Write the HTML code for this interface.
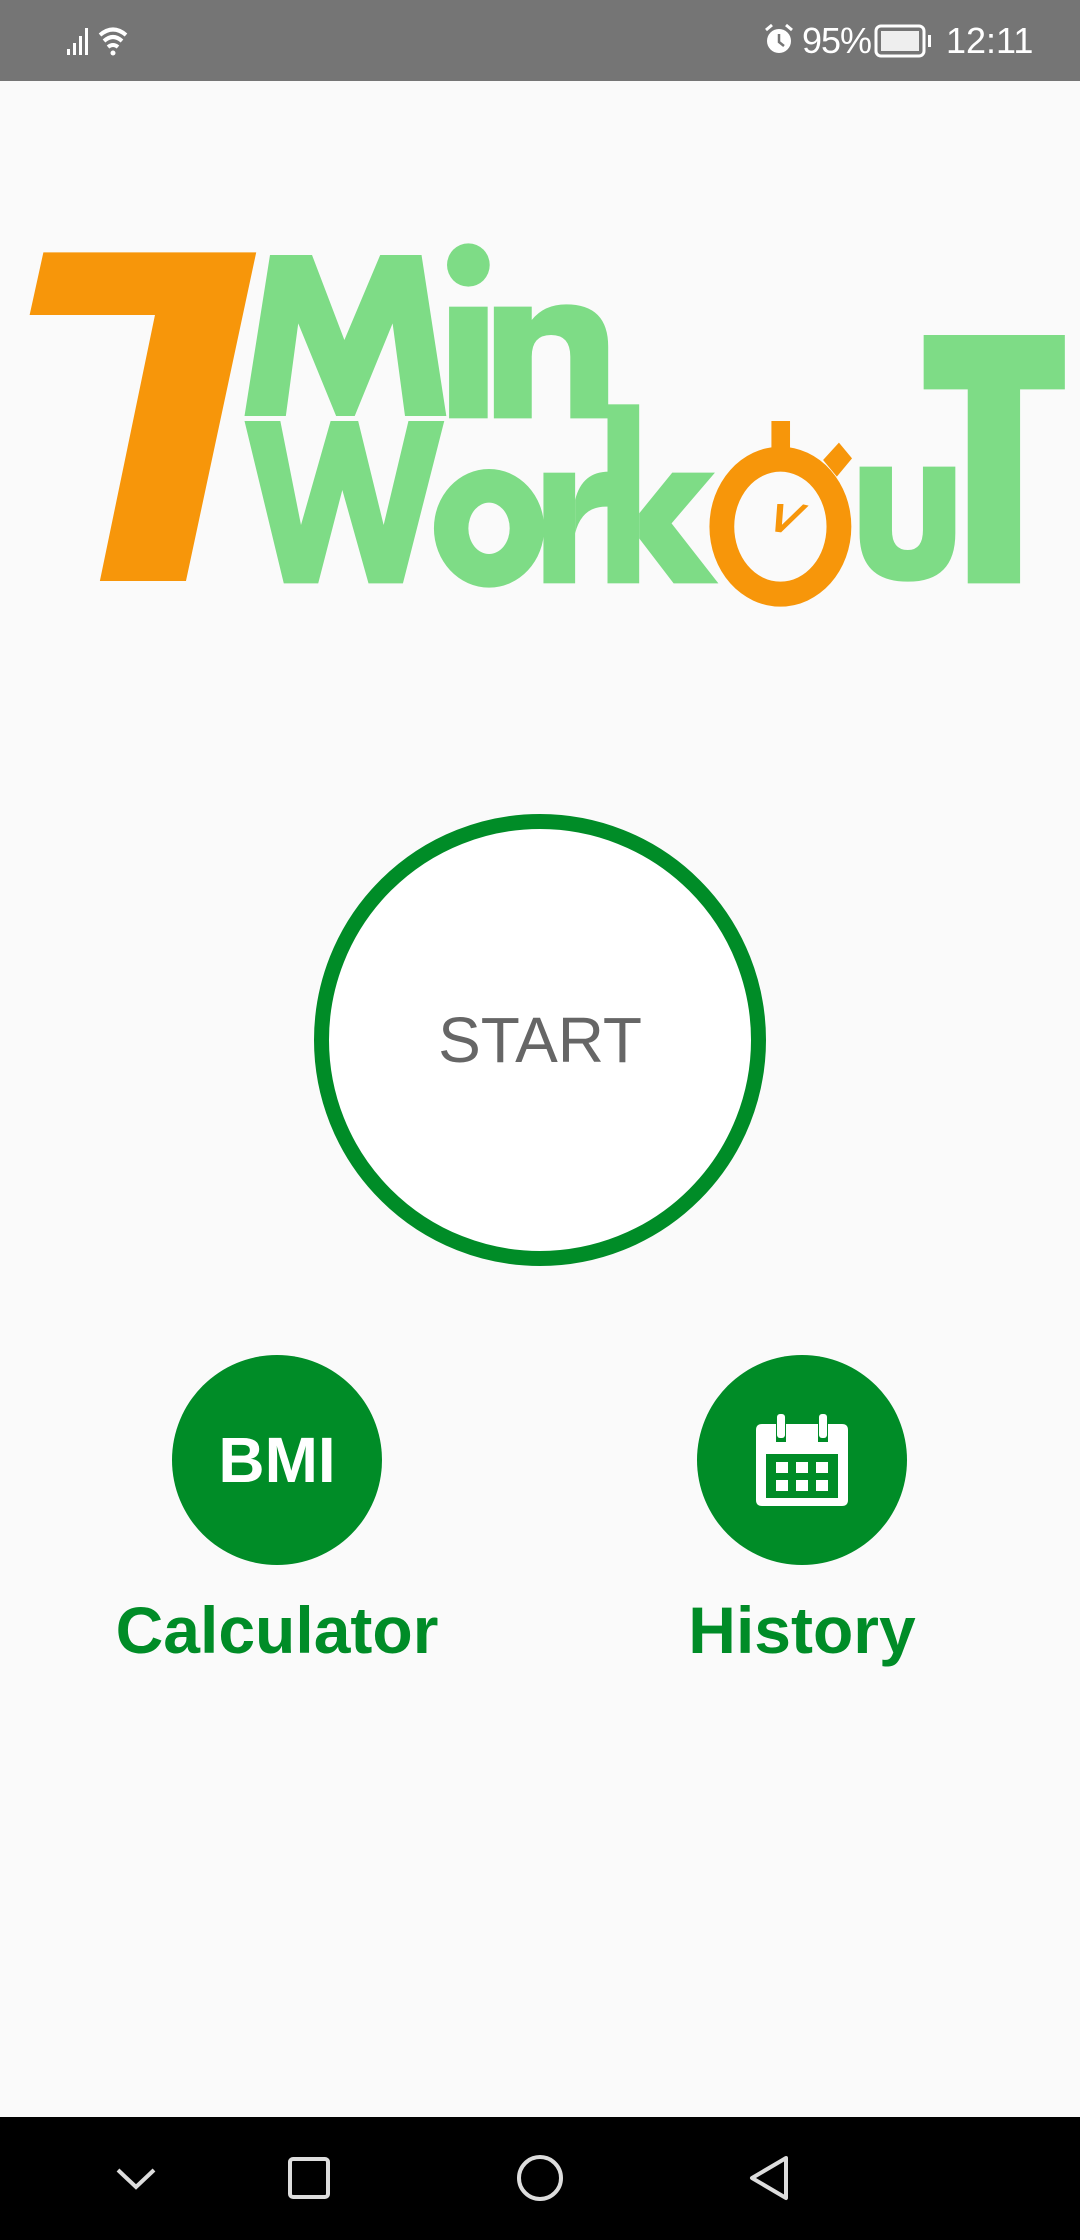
<!DOCTYPE html>
<html><head><meta charset="utf-8"><style>
html,body{margin:0;padding:0;width:1080px;height:2240px;background:#fafafa;overflow:hidden;font-family:"Liberation Sans",sans-serif;position:relative}
.sb{position:absolute;left:0;top:0;width:1080px;height:81px;background:#757575;color:#fff}
.nav{position:absolute;left:0;top:2117px;width:1080px;height:123px;background:#000}
.abs{position:absolute}
.start{position:absolute;left:314px;top:814px;width:452px;height:452px;border:15px solid #008c27;border-radius:50%;background:#fff;box-sizing:border-box;display:flex;align-items:center;justify-content:center;color:#666;font-size:64px}
.btn{position:absolute;top:1355px;width:210px;height:210px;border-radius:50%;background:#008c27;display:flex;align-items:center;justify-content:center;color:#fff;font-weight:bold;font-size:64px}
.lbl{position:absolute;top:1590px;width:400px;text-align:center;color:#008c27;font-weight:bold;font-size:66px;line-height:80px}
</style></head><body>
<div class="sb">
<svg class="abs" style="left:66px;top:22px" width="90" height="36" viewBox="0 0 90 36">
<rect x="1" y="27" width="3" height="6" fill="#fff"/><rect x="7" y="21" width="3" height="12" fill="#fff"/><rect x="13" y="14" width="3" height="19" fill="#fff"/><rect x="19" y="6" width="3" height="27" fill="#fff"/>
<path d="M34 13 Q 47 2 60 13" stroke="#fff" stroke-width="4" fill="none"/><path d="M38 19 Q 47 11 56 19" stroke="#fff" stroke-width="4" fill="none"/><path d="M42 25 Q 47 21 52 25" stroke="#fff" stroke-width="4" fill="none"/><circle cx="47" cy="31" r="2.5" fill="#fff"/>
</svg>
<svg class="abs" style="left:762px;top:22px" width="34" height="36" viewBox="0 0 34 36"><circle cx="17" cy="19" r="12" fill="#fff"/><path d="M17 12v8l5 4" stroke="#757575" stroke-width="2.5" fill="none"/><path d="M4 8l6-5M30 8l-6-5" stroke="#fff" stroke-width="3"/></svg>
<div class="abs" style="left:802px;top:20px;font-size:36px;letter-spacing:-1px">95%</div>
<svg class="abs" style="left:874px;top:24px" width="60" height="34" viewBox="0 0 60 34"><rect x="2" y="2" width="48" height="30" rx="5" fill="none" stroke="#fff" stroke-width="3"/><rect x="7" y="7" width="38" height="20" fill="#eee"/><rect x="54" y="11" width="3" height="12" fill="#fff"/></svg>
<div class="abs" style="left:946px;top:20px;font-size:36px">12:11</div>
</div>

<svg class="abs" style="left:0;top:200px" width="1080" height="420" viewBox="0 0 1568 1260" preserveAspectRatio="none">
<polygon fill="#f7960a" points="63,157 372,157 270,1143 145,1143 225,345 43,345"/>
<g fill="#7edc86">
<polygon points="392,165 453,165 500,420 552,165 612,165 648,648 588,648 570,370 515,648 488,648 433,370 415,648 355,648"/>
<ellipse cx="680" cy="195" rx="31" ry="65"/>
<rect x="652" y="320" width="56" height="335"/>
<path d="M717,320 L772,320 L772,360 Q790,313 822,313 Q883,313 883,440 L883,655 L828,655 L828,470 Q828,405 800,405 Q772,405 772,470 L772,655 L717,655 Z"/>
<polygon points="355,663 407,663 437,975 480,663 520,663 557,975 593,663 645,663 585,1150 535,1150 497,870 462,1150 412,1150"/>
<path fill-rule="evenodd" d="M630,985 A80,178 0 1,0 790,985 A80,178 0 1,0 630,985 Z M680,985 A30,77 0 1,0 740,985 A30,77 0 1,0 680,985 Z"/>
<rect x="789" y="818" width="46" height="332"/>
<path d="M835,900 Q845,815 884,815 L884,920 Q845,915 835,1000 Z"/>
<rect x="882" y="613" width="46" height="537"/>
<polygon points="928,940 976,818 1038,818 975,970 1043,1150 978,1150 928,1015"/>
<path d="M1248,800 L1295,800 L1295,990 Q1295,1050 1318,1050 Q1340,1050 1340,990 L1340,800 L1387,800 L1387,1000 Q1387,1145 1318,1145 Q1248,1145 1248,1000 Z"/>
<polygon points="1341,405 1546,405 1546,568 1481,568 1481,1150 1405,1150 1405,568 1341,568"/>
</g>
<g fill="#f7960a">
<path fill-rule="evenodd" d="M1030,980 A103,240 0 1,0 1236,980 A103,240 0 1,0 1030,980 Z M1066,980 A67,165 0 1,0 1200,980 A67,165 0 1,0 1066,980 Z"/>
<rect x="1120" y="663" width="27" height="85"/>
<polygon points="1195,780 1218,728 1237,775 1215,830"/>
</g>
<path d="M1133,912 L1130,995 L1170,915" stroke="#f7960a" stroke-width="9" fill="none"/>
</svg>

<div class="start">START</div>

<div class="btn" style="left:172px">BMI</div>
<div class="btn" style="left:697px">
<svg width="92" height="92" viewBox="0 0 92 92"><path fill="#fff" d="M0 16 Q0 10 6 10 L20 10 L20 28 L30 28 L30 10 L62 10 L62 28 L72 28 L72 10 L86 10 Q92 10 92 16 L92 86 Q92 92 86 92 L6 92 Q0 92 0 86 Z"/><rect x="21" y="0" width="8" height="24" rx="3" fill="#fff"/><rect x="63" y="0" width="8" height="24" rx="3" fill="#fff"/><rect x="10" y="40" width="72" height="44" fill="#008c27"/><g fill="#fff"><rect x="20" y="48" width="12" height="11"/><rect x="40" y="48" width="12" height="11"/><rect x="60" y="48" width="12" height="11"/><rect x="20" y="66" width="12" height="11"/><rect x="40" y="66" width="12" height="11"/><rect x="60" y="66" width="12" height="11"/></g></svg>
</div>
<div class="lbl" style="left:77px">Calculator</div>
<div class="lbl" style="left:602px">History</div>

<div class="nav">
<svg class="abs" style="left:0;top:0" width="1080" height="123" viewBox="0 0 1080 123">
<path d="M118 53 L136 70 L154 53" stroke="#ddd" stroke-width="4" fill="none"/>
<rect x="290" y="42" width="38" height="38" rx="3" stroke="#ddd" stroke-width="4" fill="none"/>
<circle cx="540" cy="61" r="21" stroke="#ddd" stroke-width="4" fill="none"/>
<path d="M786 41 L752 61 L786 81 Z" stroke="#ddd" stroke-width="4" fill="none" stroke-linejoin="round"/>
</svg>
</div>
</body></html>
